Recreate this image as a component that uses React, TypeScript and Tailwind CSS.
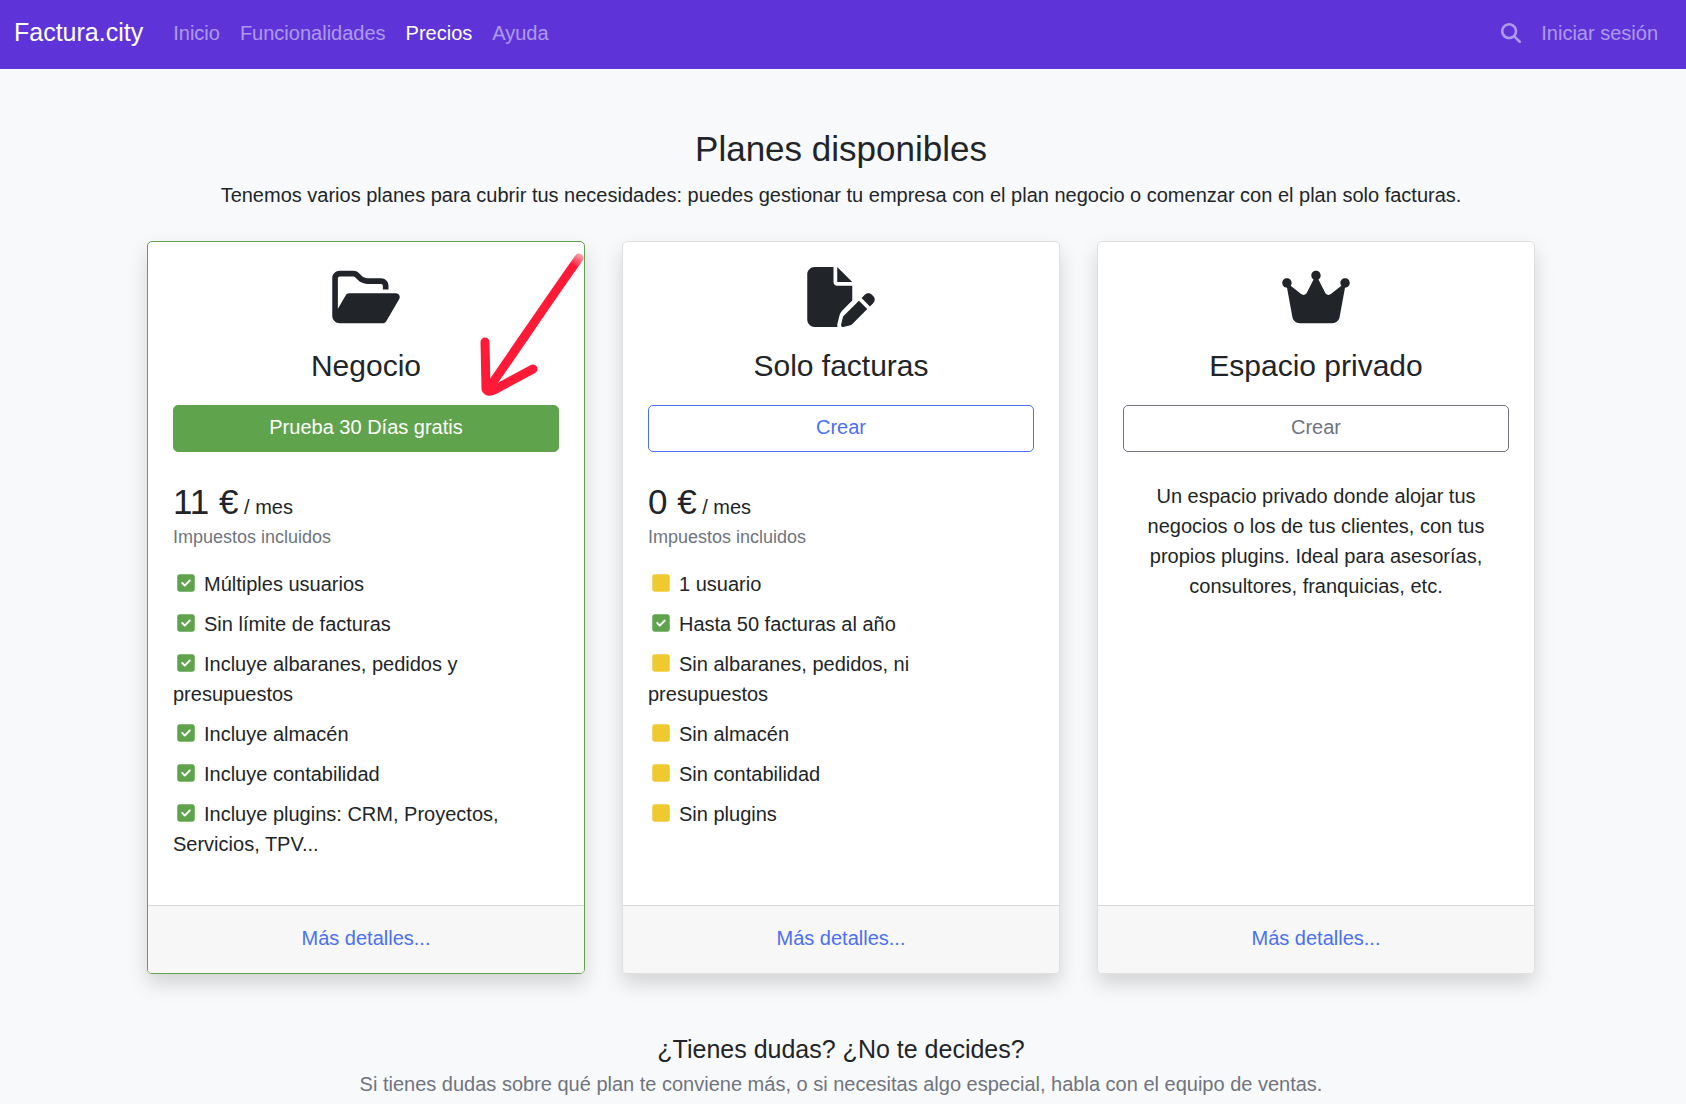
import { FaCrown, FaFilePen, FaMagnifyingGlass, FaSquare, FaSquareCheck } from "react-icons/fa6";
import type { ComponentType } from "react";
import clsx from "clsx";

type Feature = { text: string; included: boolean };

type Plan = {
  name: string;
  icon: ComponentType<{ className?: string }>;
  action: string;
  cardClass: string;
  buttonClass: string;
  price?: string;
  features?: Feature[];
  description?: string;
  highlighted?: boolean;
};

function FolderOpen({ className }: { className?: string }) {
  return (
    <svg className={className} viewBox="0 0 576 512" fill="currentColor" aria-hidden="true">
      <path d="M384 480h48c11.4 0 21.9-6 27.6-15.9l112-192c5.8-9.9 5.8-22.1 .1-32.1S555.5 224 544 224H144c-11.4 0-21.9 6-27.6 15.9L48 357.1V96c0-8.8 7.2-16 16-16H181.5c4.2 0 8.3 1.7 11.3 4.7l26.5 26.5c21 21 49.5 32.8 79.2 32.8H416c8.8 0 16 7.2 16 16v32h48V160c0-35.3-28.7-64-64-64H298.5c-17 0-33.3-6.7-45.3-18.7L226.7 50.7c-12-12-28.3-18.7-45.3-18.7H64C28.7 32 0 60.7 0 96V416c0 35.3 28.7 64 64 64H384z" />
    </svg>
  );
}

const navLinks = [
  { label: "Inicio" },
  { label: "Funcionalidades" },
  { label: "Precios", active: true },
  { label: "Ayuda" },
];

const plans: Plan[] = [
  {
    name: "Negocio",
    icon: FolderOpen,
    action: "Prueba 30 Días gratis",
    cardClass: "border-[#5fa44c]",
    buttonClass: "border-[#5fa44c] bg-[#5fa44c] text-white hover:bg-[#518b41]",
    price: "11 €",
    features: [
      { text: "Múltiples usuarios", included: true },
      { text: "Sin límite de facturas", included: true },
      { text: "Incluye albaranes, pedidos y presupuestos", included: true },
      { text: "Incluye almacén", included: true },
      { text: "Incluye contabilidad", included: true },
      { text: "Incluye plugins: CRM, Proyectos, Servicios, TPV...", included: true },
    ],
    highlighted: true,
  },
  {
    name: "Solo facturas",
    icon: FaFilePen,
    action: "Crear",
    cardClass: "border-[#dfdfdf]",
    buttonClass: "border-[#4b70f5] text-[#4b70f5] hover:bg-[#4b70f5] hover:text-white",
    price: "0 €",
    features: [
      { text: "1 usuario", included: false },
      { text: "Hasta 50 facturas al año", included: true },
      { text: "Sin albaranes, pedidos, ni presupuestos", included: false },
      { text: "Sin almacén", included: false },
      { text: "Sin contabilidad", included: false },
      { text: "Sin plugins", included: false },
    ],
  },
  {
    name: "Espacio privado",
    icon: FaCrown,
    action: "Crear",
    cardClass: "border-[#dfdfdf]",
    buttonClass: "border-[#6f7480] text-[#6f7480] hover:bg-[#6f7480] hover:text-white",
    description:
      "Un espacio privado donde alojar tus negocios o los de tus clientes, con tus propios plugins. Ideal para asesorías, consultores, franquicias, etc.",
  },
];

function Navbar() {
  return (
    <nav className="flex h-[69px] items-center bg-[#5e34d9] pr-7 pb-1 pl-[14px]">
      <a href="#" className="mr-[30px] pb-0.5 text-[25px] leading-[38px] text-white">
        Factura.city
      </a>
      <div className="flex gap-5">
        {navLinks.map((link) => (
          <a
            key={link.label}
            href="#"
            className={clsx(link.active ? "text-white" : "text-white/50 hover:text-white/75")}
          >
            {link.label}
          </a>
        ))}
      </div>
      <div className="ml-auto flex items-center gap-5 text-white/50">
        <a href="#" aria-label="Buscar" className="hover:text-white/75">
          <FaMagnifyingGlass />
        </a>
        <a href="#" className="hover:text-white/75">
          Iniciar sesión
        </a>
      </div>
    </nav>
  );
}

function Arrow() {
  return (
    <svg
      className="pointer-events-none absolute top-2.5 right-0 h-[146px] w-[106px]"
      viewBox="0 0 106 146"
      fill="none"
      strokeLinecap="round"
      strokeLinejoin="round"
      aria-hidden="true"
    >
      <defs>
        <linearGradient id="arrow" gradientUnits="userSpaceOnUse" x1="104" y1="2" x2="96" y2="14">
          <stop offset="0" stopColor="#ff1a38" stopOpacity="0.35" />
          <stop offset="1" stopColor="#ff1a38" />
        </linearGradient>
      </defs>
      <path d="M101 6C76 41 43 90 11 136" stroke="url(#arrow)" strokeWidth="9" />
      <path d="M7 90L8 137Q10 141 16 138L55 117" stroke="#ff1a38" strokeWidth="9" />
    </svg>
  );
}

function PlanCard({ plan }: { plan: Plan }) {
  const Icon = plan.icon;

  return (
    <div
      className={clsx(
        "relative flex flex-col rounded-[5px] border bg-white shadow-[0_10px_20px_rgba(0,0,0,0.15)]",
        plan.cardClass,
      )}
    >
      <div className="flex-1 px-[25px] pt-[25px] pb-[46px]">
        <Icon className="mx-auto h-[60px] w-[68px]" />
        <h2 className="mt-[21px] text-center text-[30px] leading-9">{plan.name}</h2>
        <button
          type="button"
          className={clsx(
            "mt-[21px] block h-[47px] w-full rounded-[5px] border pb-1",
            plan.buttonClass,
          )}
        >
          {plan.action}
        </button>

        {plan.price && (
          <>
            <p className="mt-[33px] leading-[34px]">
              <span className="text-[35px]">{plan.price}</span> / mes
            </p>
            <p className="text-[18px] leading-[27px] text-[#6f7480]">Impuestos incluidos</p>
          </>
        )}

        {plan.features && (
          <ul className="mt-[18px] space-y-2.5">
            {plan.features.map((feature) => (
              <li key={feature.text}>
                <span className="mr-1.5 inline-block w-[25px] align-[-2px]">
                  {feature.included ? (
                    <FaSquareCheck className="mx-auto text-[#5fa44c]" />
                  ) : (
                    <FaSquare className="mx-auto text-[#efc930]" />
                  )}
                </span>
                {feature.text}
              </li>
            ))}
          </ul>
        )}

        {plan.description && <p className="mt-[29px] text-center">{plan.description}</p>}
      </div>
      <div className="rounded-b-[4px] border-t border-[#d8d8d8] bg-[#f7f7f7] pt-[17px] pb-5 text-center">
        <a href="#" className="text-[#4b70f5] hover:underline">
          Más detalles...
        </a>
      </div>
      {plan.highlighted && <Arrow />}
    </div>
  );
}

export default function App() {
  return (
    <div className="min-h-screen bg-[#f8f9fb] font-['Liberation_Sans',Arial,sans-serif] text-[20px] leading-[30px] text-[#212529]">
      <Navbar />
      <main className="pt-[59px] pr-1">
        <header className="px-4 text-center">
          <h1 className="text-[35px] leading-[42px]">Planes disponibles</h1>
          <p className="mt-2.5">
            Tenemos varios planes para cubrir tus necesidades: puedes gestionar tu empresa con el
            plan negocio o comenzar con el plan solo facturas.
          </p>
        </header>
        <section className="mx-auto mt-[31px] grid max-w-[1388px] gap-[37px] lg:grid-cols-3">
          {plans.map((plan) => (
            <PlanCard key={plan.name} plan={plan} />
          ))}
        </section>
        <section className="mt-[60px] px-4 text-center">
          <h2 className="text-[25px] leading-[30px]">¿Tienes dudas? ¿No te decides?</h2>
          <p className="mt-[5px] text-[#6f7480]">
            Si tienes dudas sobre qué plan te conviene más, o si necesitas algo especial, habla con
            el equipo de ventas.
          </p>
        </section>
      </main>
    </div>
  );
}
